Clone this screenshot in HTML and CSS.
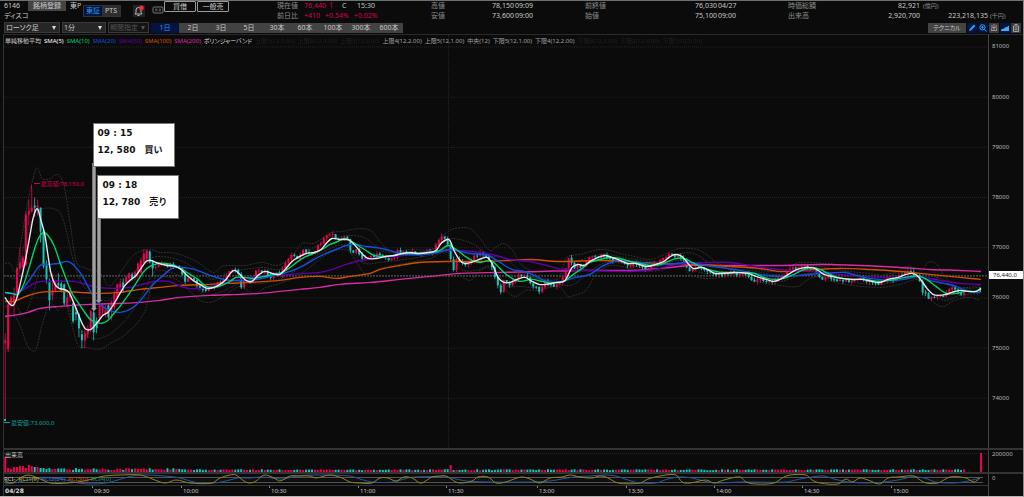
FILE: index.html
```html
<!DOCTYPE html>
<html lang="ja">
<head>
    <meta charset="UTF-8">
    <meta name="viewport" content="width=device-width, initial-scale=1.0">
    <title>6146 ディスコ</title>
    <link rel="stylesheet" href="styles.css">
</head>
<body>
    <header class="quote">
        <div class="identity">
            <div class="stock">
                <div class="stock-line">
                    <span class="code">6146</span>
                    <button class="btn-register">銘柄登録</button>
                    <span>東P</span>
                </div>
                <div class="stock-name">ディスコ</div>
            </div>
            <div class="market">
                <button class="active">東証</button>
                <button>PTS</button>
            </div>
            <button class="icon-bell" aria-label="アラート">
                <svg viewBox="0 0 12 12">
                    <path d="M2 9h7l-1-1.5V5a2.5 2.5 0 0 0-5 0v2.5z" fill="none" stroke="#bbb"/>
                    <path d="M4.5 10.5h2" stroke="#bbb"/>
                    <circle cx="8.4" cy="3" r="2.4" fill="#f03030"/>
                </svg>
            </button>
            <svg class="icon-card" viewBox="0 0 12 8">
                <rect x="1" y="1" width="10" height="6" rx="1" fill="none" stroke="#777"/>
                <path d="M3 3.2h2.4M3 4.8h2.4M6.6 3.2h2.4M6.6 4.8h2.4" stroke="#666"/>
            </svg>
            <div class="flags">
                <button>貸借</button>
                <button>一般売</button>
            </div>
        </div>
        <div class="info">
            <div class="info-now">
                <span class="label">現在値</span>
                <span class="up">76,440 ↑</span>
                <span>C</span>
                <span>15:30</span>
            </div>
            <div class="info-item">
                <span class="label">高値</span><span class="value">78,150</span><span>09:09</span>
            </div>
            <div class="info-item wide">
                <span class="label">前終値</span><span class="value">76,030</span><span>04/27</span>
            </div>
            <div class="info-item wide">
                <span class="label">時価総額</span><span class="value">82,921</span><span class="unit">(億円)</span>
            </div>
            <div class="info-change">
                <span class="label">前日比</span>
                <span class="up">+410</span>
                <span class="up">+0.54%</span>
                <span class="up">+0.02%</span>
            </div>
            <div class="info-item">
                <span class="label">安値</span><span class="value">73,600</span><span>09:00</span>
            </div>
            <div class="info-item wide">
                <span class="label">始値</span><span class="value">75,100</span><span>09:00</span>
            </div>
            <div class="info-item wide">
                <span class="label">出来高</span><span class="value">2,920,700</span><span class="turnover">223,218,135</span><span class="unit">(千円)</span>
            </div>
        </div>
    </header>

    <nav class="toolbar">
        <div class="select select-type"><select aria-label="チャート種別"><option>ローソク足</option></select></div>
        <div class="select select-span"><select aria-label="足種"><option>1分</option></select></div>
        <div class="select select-range disabled"><select aria-label="期間" disabled><option>期間指定</option></select></div>
        <div class="period">
            <button class="active">1日</button>
            <button>2日</button>
            <button>3日</button>
            <button>5日</button>
            <button>30本</button>
            <button>60本</button>
            <button>100本</button>
            <button>300本</button>
            <button>600本</button>
        </div>
        <div class="tools">
            <button class="btn-technical">テクニカル</button>
            <button class="tool blue" aria-label="描画">
                <svg viewBox="0 0 10 10"><path d="M2 8l.6-2L7 1.6 8.4 3 4 7.4z" fill="#3aa0e8"/></svg>
            </button>
            <button class="tool blue" aria-label="拡大">
                <svg viewBox="0 0 10 10"><circle cx="4.5" cy="4.3" r="2.6" fill="none" stroke="#3aa0e8"/><path d="M6.3 6.3L8.6 8.6M3.2 4.3h2.6M4.5 3v2.6" stroke="#3aa0e8"/></svg>
            </button>
            <button class="tool">出</button>
            <button class="tool blue" aria-label="出来高">
                <svg viewBox="0 0 10 10"><path d="M1 8V6.4L4 5.6 6 4h1l2-1.500V8z" fill="#3ab0f0"/></svg>
            </button>
            <button class="tool" aria-label="保存">
                <svg viewBox="0 0 10 10"><path d="M2.5 3h5v5.5h-5zM3.5 1.5h3M3.5 5h3M3.5 6.7h3" fill="none" stroke="#bbb" stroke-width=".8"/></svg>
            </button>
        </div>
    </nav>

    <main class="chart">
        <section class="panel price-panel">
            <svg id="price" viewBox="4 34 984 414" preserveAspectRatio="none"></svg>
            <div class="legend">
                <span>単純移動平均</span>
                <span class="sma5">SMA(5)</span>
                <span class="sma10">SMA(10)</span>
                <span class="sma20">SMA(20)</span>
                <span class="sma50">SMA(50)</span>
                <span class="sma100">SMA(100)</span>
                <span class="sma200">SMA(200)</span>
                <span class="band-title">ボリンジャーバンド</span>
                <span class="off">上限1(12,5.00)</span>
                <span class="off">上限2(12,4.00)</span>
                <span class="off">上限3(12,3.00)</span>
                <span class="band">上限4(12,2.00)</span>
                <span class="band">上限5(12,1.00)</span>
                <span class="band">中央(12)</span>
                <span class="band">下限5(12,1.00)</span>
                <span class="band">下限4(12,2.00)</span>
                <span class="off">下限3(12,3.00)</span>
                <span class="off">下限2(12,4.00)</span>
                <span class="off">下限1(12,5.00)</span>
            </div>
            <div class="mark high">最高値:78,150.0</div>
            <div class="mark low">最安値:73,600.0</div>
            <div class="stem stem-buy"></div>
            <div class="stem stem-sell"></div>
            <div class="note note-buy">09 : 15<br>12, 580&emsp;買い</div>
            <div class="note note-sell">09 : 18<br>12, 780&emsp;売り</div>
        </section>
        <div class="axis" id="price-axis"><span class="last">76,440.0</span></div>

        <section class="panel volume-panel">
            <svg id="volume" viewBox="4 450 984 22" preserveAspectRatio="none"></svg>
            <div class="legend"><span>出来高</span></div>
        </section>
        <div class="axis volume-axis"><span>200000</span></div>

        <section class="panel rci-panel">
            <svg id="rci" viewBox="4 474 984 11" preserveAspectRatio="none"></svg>
            <div class="legend">
                <span>RCI-</span>
                <span class="rci1">RCI1(9)</span>
                <span class="rci2">RCI2(24)</span>
                <span class="rci3">RCI3(0)</span>
                <span class="rci4">RCI4(0)</span>
            </div>
        </section>
        <div class="axis rci-axis"><span>0</span></div>

        <div class="panel time-axis" id="time-axis"></div>
        <div class="axis"></div>
    </main>
    <script src="chart.js"></script>
</body>
</html>
```
FILE: styles.css
```css
* {
    box-sizing: border-box;
}
body {
    margin: 0;
    min-height: 100vh;
    display: flex;
    flex-direction: column;
    background-color: #0b0b0b;
    color: #c8c8c8;
    font-family: "Noto Sans", "Noto Sans CJK JP", sans-serif;
    font-feature-settings: "palt";
    font-size: 7px;
    line-height: 10px;
    border-top: 1px solid #6c706e;
    border-right: 1px solid #8a8a8a;
    border-bottom: 1px solid #b4b4b4;
}
button, select {
    font: inherit;
    font-feature-settings: inherit;
    color: inherit;
    border: none;
    padding: 0;
    margin: 0;
    background: none;
    cursor: pointer;
}

/* quote header */
.quote {
    display: flex;
    height: 20px;
    white-space: nowrap;
}
.identity {
    flex: 0 0 277px;
    display: flex;
    align-items: flex-start;
    padding-left: 4px;
}
.stock {
    width: 79px;
}
.stock-line {
    display: flex;
}
.code {
    width: 24px;
}
.btn-register {
    width: 38px;
    height: 10px;
    margin-right: 4px;
    background-color: #444;
}
.market {
    display: flex;
    margin-top: 4px;
    border: 1px solid #333;
}
.market button {
    width: 18px;
    height: 10px;
    background-color: #2e2e2e;
    line-height: 10px;
}
.market .active, .period .active {
    background-color: #041440;
    color: #2a9be0;
}
.icon-bell {
    width: 12px;
    height: 12px;
    margin: 4px 7px 0 12px;
    background-color: #222;
}
svg {
    display: block;
}
.icon-card {
    flex: none;
    width: 12px;
    height: 8px;
    margin-top: 5px;
}
.flags {
    display: flex;
    gap: 1px;
}
.flags button {
    width: 32px;
    height: 11px;
    border: 1px solid #999;
    border-radius: 1px;
    line-height: 9px;
}
.info {
    flex: 1;
    display: grid;
    grid-template-columns: 154fr 154fr 203fr 235fr;
    grid-auto-rows: 10px;
}
.info-now, .info-change, .info-item {
    display: flex;
}
.label {
    width: 27px;
    color: #8c8c8c;
}
.info-now .up {
    width: 38px;
}
.info-now span:nth-child(3) {
    width: 15px;
}
.info-change {
    gap: 5px;
}
.info-change .label {
    width: 22px;
}
.up {
    color: #d8004a;
}
.value {
    width: 56px;
    margin-right: 1px;
    text-align: right;
}
.wide .value {
    width: 105px;
}
.unit {
    margin-left: 2px;
    color: #8c8c8c;
    font-size: 6px;
}
.turnover {
    width: 67px;
    text-align: right;
}

/* toolbar */
.toolbar {
    display: flex;
    align-items: center;
    gap: 2px;
    height: 13px;
    padding: 0 2px 0 4px;
}
.select {
    position: relative;
    height: 11px;
    background-color: #262626;
    border: 1px solid #3a3a3a;
}
.select::after {
    content: "";
    position: absolute;
    right: 3px;
    top: 3px;
    border: 2px solid transparent;
    border-top: 4px solid #ddd;
    border-bottom: none;
    pointer-events: none;
}
.select select {
    display: block;
    width: 100%;
    height: 9px;
    line-height: 9px;
    padding-left: 1px;
    appearance: none;
    opacity: 1;
}
.select-type {
    width: 56px;
}
.select-span {
    width: 44px;
}
.select-range {
    width: 41px;
}
.disabled {
    background-color: #141414;
    color: #555;
}
.disabled::after {
    border-top-color: #555;
}
.period {
    display: flex;
    background-color: #424242;
}
.period button {
    width: 28px;
    height: 10px;
}
.tools {
    display: flex;
    gap: 1px;
    margin-left: auto;
}
.btn-technical {
    width: 38px;
    height: 10px;
    background-color: #444;
    font-size: 6px;
}
.tool {
    width: 10px;
    height: 10px;
    background-color: #3a3a3a;
}
.blue {
    background-color: #041440;
}

/* chart */
.chart {
    flex: 1;
    display: grid;
    grid-template-columns: 1fr 35px;
    grid-template-rows: 1fr 24px 12px 10px;
    margin-left: 3px;
    border-left: 1px solid #333;
    font-size: 6px;
    line-height: 8px;
}
.panel {
    position: relative;
    min-width: 0;
    min-height: 0;
}
.panel svg {
    position: absolute;
    width: 100%;
    height: 100%;
}
.price-panel {
    border-top: 1px solid #2a2a2a;
    border-bottom: 2px solid #333;
}
.volume-panel {
    border-bottom: 2px solid #333;
}
.rci-panel {
    border-bottom: 1px solid #333;
}
.axis {
    position: relative;
    border-left: 1px solid #444;
    color: #b4b4b4;
}
.price-panel + .axis {
    border-top: 1px solid #2a2a2a;
    border-bottom: 2px solid #333;
}
.volume-axis {
    border-bottom: 2px solid #333;
}
.axis span {
    display: block;
    padding-left: 3px;
}
#price-axis span {
    position: absolute;
    left: 0;
    margin-top: -4px;
}
#price-axis .last {
    right: 0;
    padding-left: 4px;
    background-color: #fff;
    color: #222;
}
.legend {
    position: absolute;
    top: 2px;
    left: 1px;
    display: flex;
    gap: 3px;
    white-space: nowrap;
}
.volume-panel .legend {
    top: 1px;
}
.rci-panel .legend {
    top: 1px;
    left: 0;
}
.sma5 { color: #fff; }
.sma10 { color: #00d468; }
.sma20 { color: #1450dc; }
.sma50 { color: #6000a4; }
.sma100 { color: #dc5000; }
.sma200 { color: #d82ca4; }
.band { color: #a0a0a0; }
.off { color: #202020; }
.band-title { color: #ddd; }
.rci1 { color: #c0b414; }
.rci2 { color: #3470d0; }
.rci3 { color: #d05018; }
.rci4 { color: #149058; }

.mark {
    position: absolute;
    white-space: nowrap;
}
.mark::before {
    content: "";
    display: inline-block;
    width: 6px;
    height: 1px;
    margin-right: 1px;
    vertical-align: 2px;
    background-color: currentColor;
}
.high {
    left: 3%;
    top: 35%;
    color: #d00046;
}
.low {
    left: 0;
    top: 93%;
    color: #10a098;
}
.note {
    position: absolute;
    width: 82px;
    padding: 1px 4px 7px;
    background-color: #fff;
    border: 1px solid #777;
    color: #111;
    font: bold 9px/17px "DejaVu Sans", "Noto Sans CJK JP", sans-serif;
    font-feature-settings: normal;
    white-space: nowrap;
}
.note-buy {
    left: 9%;
    top: 21.4%;
}
.note-sell {
    left: 9.5%;
    top: 34%;
}
.stem {
    position: absolute;
    width: 4px;
    background-color: #a0a0a0;
    border: 1px solid #777;
    border-width: 0 1px;
}
.stem::after {
    content: "";
    position: absolute;
    left: -2px;
    bottom: -2px;
    border: 3px solid transparent;
    border-top-color: #a0a0a0;
    border-bottom: none;
}
.stem-buy {
    left: 8.9%;
    top: 31%;
    height: 35.4%;
}
.stem-sell {
    left: 9.5%;
    top: 44%;
    height: 20.4%;
}

.time-axis span {
    position: absolute;
    top: 1px;
    padding-left: 2px;
}
.time-axis .date {
    left: 0;
    padding-left: 1px;
    color: #ddd;
    font-family: "DejaVu Sans", sans-serif;
    font-weight: bold;
}
.time-axis span:not(.date)::before {
    content: "";
    position: absolute;
    left: 0;
    top: -1px;
    height: 2px;
    border-left: 1px solid #888;
}

/* svg parts */
.chart path {
    vector-effect: non-scaling-stroke;
}
.line {
    fill: none;
    stroke-width: 1.4;
}
.line.sma5 { stroke: #e8e8e8; }
.line.sma10 { stroke: #00d468; }
.line.sma20 { stroke: #1450dc; }
.line.sma50 { stroke: #6000a4; }
.line.sma100 { stroke: #d05000; }
.line.sma200 { stroke: #d82ca4; }
.line.bb {
    stroke: #303030;
    stroke-width: 1;
    stroke-dasharray: 2 1;
}
.line.rci1 { stroke: #8c8420; stroke-width: 1; }
.line.rci2 { stroke: #28549c; stroke-width: 1; }
.grid {
    stroke: #242424;
    stroke-dasharray: 1 1;
}
.current {
    stroke: #686868;
    stroke-dasharray: 2 1;
}
.guide { stroke: #555; }
.rise { fill: #f00050; }
.fall { fill: #12c8bc; }
```
FILE: chart.js
```js
const PITCH = 2.95;

// keypoints of each line: x,y pairs
const LINES = {
    bb: [
        '5,263 10,263 16,270 22,235 28,200 33,178 37,167 42,178 50,178 58,174 64,185 70,222 76,260 84,267 92,270 100,272 108,285 114,282 122,270 132,256 142,250 150,249 160,252 170,252 180,254 190,258 200,263 206,268 214,272 222,266 232,265 246,265 262,262 276,265 284,262 294,253 302,243 314,243 322,238 332,232 342,231 352,229 362,228 372,231 380,241 390,250 410,249 434,248 442,236 450,230 454,228 470,228 480,238 490,250 498,245 504,243 512,249 520,263 530,270 540,277 550,280 560,275 566,258 572,255 580,254 590,251 600,249 610,250 620,253 630,255 650,259 662,255 670,251 680,248 690,248 700,250 710,257 718,263 730,266 750,268 770,271 784,270 796,263 808,262 824,263 836,264 846,270 870,273 890,275 906,266 916,268 922,270 928,262 936,263 944,275 956,286 968,287 980,285',
        '5,275 18,275 24,245 32,220 40,209 58,210 64,222 72,255 80,280 90,292 104,300 112,298 124,287 134,272 146,260 160,256 180,260 200,271 212,279 230,272 262,267 280,269 296,258 310,249 330,239 350,235 366,238 384,251 430,250 446,239 460,239 474,244 490,255 504,257 520,270 540,279 558,279 570,265 586,258 604,254 630,258 656,261 676,254 694,253 714,265 750,270 780,274 804,265 836,269 870,276 904,271 924,274 940,278 958,288 980,287',
        '5,306 16,305 24,315 34,290 42,262 52,275 62,288 70,310 80,328 92,338 106,336 118,327 130,314 142,295 154,272 170,272 188,280 204,294 220,292 240,283 262,283 286,276 304,264 326,250 346,245 362,262 380,262 430,255 450,250 460,268 476,270 492,266 506,285 520,286 540,287 562,285 574,284 594,268 612,261 650,268 680,260 700,272 750,275 780,281 808,273 840,280 880,284 916,278 930,291 944,300 960,295 980,293',
        '5,317 14,316 20,325 26,342 30,349 36,349 42,325 50,303 58,310 66,305 72,325 78,345 86,347 100,349 112,342 122,337 130,330 138,322 146,308 150,290 156,276 166,276 178,280 190,291 200,300 210,302 222,297 240,286 254,293 266,287 280,283 300,274 330,252 348,250 358,264 366,274 380,268 430,258 448,252 456,270 470,280 480,270 490,268 500,282 508,292 516,296 526,290 540,290 550,287 560,287 568,296 574,295 586,290 596,274 610,265 640,270 660,270 680,264 690,274 706,278 740,276 760,282 780,285 798,286 810,278 824,276 840,283 880,287 900,284 920,280 928,295 936,304 944,306 954,300 970,297 980,300'
    ],
    sma200: ['5,316 14,315 28,312 40,308 60,306 90,304 120,303 140,302 160,300 180,297 210,295 240,294 260,293 280,291 300,289 320,287 340,284 370,282 400,279 430,276 460,273 500,272 540,271 580,270 630,270 650,269 670,267 690,265 710,265 740,265 780,265 820,264 860,265 900,267 930,269 960,270 981,271'],
    sma100: ['5,301 14,301 26,296 40,292 60,291 80,292 100,293 120,292 140,289 160,287 180,285 210,284 225,283 250,282 280,280 300,277 320,276 336,278 350,276 370,273 380,269 400,265 420,262 450,261 480,261 510,260 530,259 560,261 600,260 640,262 680,264 700,264 730,266 760,268 780,271 800,270 840,268 870,269 900,271 930,274 960,277 981,279'],
    sma50: ['5,293 16,293 26,288 34,283 42,281 60,281 74,281 86,284 98,287 114,288 130,287 142,284 156,281 168,281 176,284 188,288 200,288 212,286 222,284 236,280 250,277 270,275 290,274 304,273 320,272 332,269 346,264 360,260 380,257 396,256 420,253 440,250 460,250 480,252 496,255 510,259 530,261 550,266 564,269 590,270 630,271 656,269 670,265 690,263 706,262 730,262 750,265 770,268 790,270 820,272 850,275 880,277 900,277 918,276 940,280 960,283 981,284'],
    sma20: ['5,292 16,293 24,287 32,276 40,265 48,264 58,263 68,261 74,265 82,275 90,290 96,300 104,307 112,311 120,312 130,309 138,303 146,293 154,283 162,276 172,268 180,267 190,268 200,271 210,275 220,278 230,280 250,280 262,278 278,274 290,271 302,266 314,259 326,253 336,249 346,245 356,244 366,246 376,247 386,249 396,252 408,254 424,254 438,252 450,249 460,251 470,253 488,255 500,262 512,269 524,271 534,275 544,280 556,282 566,280 576,277 590,274 602,266 614,261 624,260 640,262 660,264 676,263 690,262 706,265 720,267 740,270 760,274 780,276 800,275 820,273 844,272 856,275 870,278 890,280 904,279 918,276 930,280 944,283 956,286 968,291 980,292'],
    sma10: ['5,292 12,293 18,294 24,283 30,264 36,244 40,235 44,232 48,235 54,245 60,262 66,278 72,293 78,302 84,311 90,319 96,322 102,323 108,320 114,313 120,306 128,295 136,283 144,271 150,266 158,263 166,263 174,265 182,269 190,274 198,279 206,286 214,287 222,285 230,281 236,277 244,277 254,278 264,276 274,274 282,272 290,267 298,261 306,256 314,253 322,249 330,244 338,241 344,238 350,240 358,245 366,250 374,255 384,256 394,255 406,253 420,253 432,252 440,250 448,245 456,249 464,255 472,260 480,262 490,260 496,264 504,272 512,278 520,281 532,279 542,281 552,283 564,281 572,275 582,268 590,262 600,259 610,257 620,258 630,261 640,263 650,265 660,264 668,261 676,258 684,258 692,262 702,267 712,270 722,272 740,272 754,273 764,277 774,279 784,278 794,274 804,269 812,267 820,269 828,273 838,277 850,279 864,279 880,281 890,280 900,278 912,276 920,276 928,280 936,286 946,293 956,293 966,291 976,291 981,289'],
    sma5: ['5,297 9,303 13,305 17,297 21,280 25,262 29,240 33,218 36,209 38,209 41,220 45,235 48,255 51,273 55,284 59,288 64,289 69,292 74,303 78,313 82,323 86,329 91,329 95,325 99,320 103,315 108,312 113,305 120,293 125,285 130,280 136,275 141,268 146,261 151,260 156,262 162,264 168,265 175,266 181,269 186,274 193,280 200,284 207,288 214,287 220,284 226,279 231,272 235,270 240,274 246,280 252,281 258,275 265,271 272,273 280,274 286,268 292,261 298,257 306,253 314,252 321,249 327,242 332,238 340,239 346,239 350,240 356,246 362,253 368,258 376,258 386,256 394,255 402,253 410,252 418,253 428,252 436,250 441,243 447,239 450,240 454,250 460,260 465,263 474,261 482,258 487,257 492,263 498,277 504,282 510,282 517,279 525,277 532,281 539,284 546,284 556,282 565,280 572,267 578,264 584,265 590,261 598,257 605,255 612,257 620,260 628,263 636,263 646,266 656,264 664,261 669,257 675,254 682,256 688,263 693,268 702,267 709,270 715,273 722,273 736,272 748,273 756,276 766,279 774,281 782,278 790,273 797,269 806,267 815,268 824,274 832,276 842,278 852,279 862,279 872,281 880,282 888,279 898,277 906,274 912,273 917,275 922,281 927,288 933,294 938,295 946,294 952,292 960,290 968,291 976,291 981,288']
};

const RCI = {
    rci2: '5,484 14,483 28,480 40,478 54,478 66,480 78,483 92,484 106,483 118,480 128,477 140,475 165,476 180,478 190,481 200,483 214,483 226,481 238,478 250,478 262,477 272,478 284,479 296,476 320,475 350,476 360,479 372,482 394,482 404,479 414,477 446,477 456,479 466,481 490,482 530,482 550,481 562,479 574,477 590,476 604,475 616,476 628,480 640,483 656,483 668,479 680,477 692,478 704,481 716,483 740,482 786,482 800,479 812,477 824,476 834,479 848,482 868,483 884,482 898,480 912,477 924,478 936,482 954,483 968,481 980,478',
    rci1: '5,481 12,483 20,478 28,475 38,478 50,483 68,483 84,481 96,478 104,476 120,475 140,475 150,478 160,482 166,483 176,480 190,483 212,483 220,478 230,475 236,475 244,481 250,483 256,481 262,476 266,475 274,478 280,481 290,476 300,476 310,476 316,478 330,475 342,478 350,482 360,483 372,483 380,478 388,478 396,481 404,477 412,478 420,483 424,482 432,477 440,476 446,476 456,482 462,483 472,481 478,477 488,477 496,483 506,482 514,479 522,477 530,479 540,483 550,478 562,477 570,475 580,477 592,478 600,476 606,477 618,483 640,483 648,479 660,476 676,475 682,482 690,483 706,480 714,483 724,480 740,477 746,482 756,484 774,483 784,477 790,475 806,475 812,480 820,483 838,484 846,479 852,482 860,478 868,480 880,484 888,478 898,477 914,476 920,480 926,483 938,483 950,477 966,478 974,482 980,478'
};

// opening hour, one candle a minute: high, low, top, bottom, 1 = rise
const OPENING = [
    [333, 420, 340, 343, 1], [302, 352, 304, 349, 1], [295, 307, 297, 305, 1], [287, 316, 295, 303, 1],
    [267, 297, 268, 293, 1], [247, 270, 262, 268, 1], [255, 270, 257, 267, 1], [211, 265, 214, 265, 1],
    [199, 225, 210, 214, 1], [187, 212, 207, 211, 1], [197, 216, 205, 207, 0], [199, 215, 205, 207, 1],
    [207, 242, 207, 231, 0], [227, 268, 230, 266, 0], [260, 283, 265, 279, 0], [278, 310, 282, 300, 0],
    [273, 300, 290, 295, 1], [280, 292, 282, 290, 1], [273, 287, 283, 285, 0], [280, 292, 283, 290, 0],
    [283, 305, 284, 303, 0], [292, 307, 297, 305, 1], [287, 301, 293, 297, 1], [302, 323, 303, 321, 0],
    [307, 320, 312, 314, 0], [313, 337, 314, 328, 0], [330, 348, 334, 340, 0], [328, 348, 333, 340, 1],
    [325, 338, 328, 334, 1], [310, 332, 311, 328, 1], [307, 340, 312, 332, 0], [317, 333, 322, 328, 0],
    [303, 323, 304, 318, 1], [303, 315, 305, 310, 1], [305, 317, 310, 314, 1], [303, 318, 305, 317, 0],
    [300, 320, 302, 310, 1], [290, 309, 293, 307, 1], [283, 300, 284, 297, 1], [278, 290, 283, 287, 1],
    [278, 292, 282, 287, 0], [275, 285, 277, 282, 1], [272, 282, 273, 278, 1], [272, 280, 274, 278, 0],
    [270, 280, 272, 277, 1], [262, 277, 263, 273, 1], [257, 273, 260, 272, 1], [249, 263, 253, 262, 1],
    [249, 262, 250, 258, 1], [250, 263, 251, 262, 0], [260, 276, 261, 268, 0]
];

// closing prices after that
const CLOSES = '153,268 160,264 165,265 172,264 178,266 181,267 184,281 190,276 198,285 205,291 212,286 220,282 226,275 232,268 238,270 240,287 244,281 250,282 254,273 260,270 266,272 271,278 276,273 281,273 286,262 292,255 297,258 302,250 308,252 314,253 318,245 324,238 328,233 332,234 337,240 344,236 348,240 351,252 357,250 362,260 368,257 374,256 378,254 384,257 391,260 398,250 406,252 414,253 421,254 428,252 434,249 438,240 443,235 447,238 450,255 453,274 456,260 462,263 470,265 476,253 482,254 488,256 493,272 498,285 501,291 504,277 511,285 518,276 526,274 532,285 540,291 546,280 554,286 562,280 566,265 569,258 575,267 582,265 590,258 597,256 604,254 612,262 620,258 628,266 636,262 644,268 652,265 660,262 664,256 672,254 678,257 684,260 688,270 694,268 700,265 707,273 714,275 720,275 728,272 738,273 748,274 752,281 758,278 764,281 769,283 776,277 784,275 788,270 796,267 804,267 812,268 818,273 822,279 828,276 836,279 844,280 850,281 856,278 862,278 868,280 874,284 880,284 886,279 894,278 900,276 906,271 910,270 916,276 919,277 921,290 925,292 928,300 932,295 940,297 948,290 954,287 958,290 960,297 963,292';

function points(text) {
    return text.split(' ').map(p => p.split(',').map(Number));
}

function curve(text) {
    const p = points(text);
    let d = 'M' + p[0];
    for (let i = 0; i < p.length - 1; i++) {
        const a = p[i - 1] || p[i], b = p[i], c = p[i + 1], e = p[i + 2] || c;
        const third = (c[0] - b[0]) / 3;
        const s1 = (c[1] - a[1]) / (c[0] - a[0]), s2 = (e[1] - b[1]) / (e[0] - b[0]);
        d += `C${b[0] + third},${b[1] + s1 * third} ${c[0] - third},${c[1] - s2 * third} ${c}`;
    }
    return d;
}

function valueAt(p, x) {
    let i = 1;
    while (i < p.length - 1 && p[i][0] < x) i++;
    const [x0, y0] = p[i - 1], [x1, y1] = p[i];
    return y0 + (y1 - y0) * (x - x0) / (x1 - x0);
}

function noise(i) {
    const n = Math.sin(i * 127.1) * 43758.5453;
    return n - Math.floor(n);
}

function line(name, text) {
    return `<path class="line ${name}" d="${curve(text)}"/>`;
}

function rect(x, y, w, h, cls) {
    return `<rect class="${cls}" x="${x}" y="${y}" width="${w}" height="${h}"/>`;
}

function priceY(price) {
    return 297.5 - (price - 76000) * 0.0503;
}

const candles = OPENING.slice();
const closes = points(CLOSES);
for (let i = candles.length; 5.2 + i * PITCH < 965; i++) {
    const x = 5.2 + i * PITCH;
    const open = valueAt(closes, x - PITCH) + (noise(i - 1) - 0.5) * 4;
    const close = valueAt(closes, x) + (noise(i) - 0.5) * 4;
    const top = Math.min(open, close), bottom = Math.max(open, close, top + 1);
    candles.push([top - noise(i + 500) * 3, bottom + noise(i + 900) * 3, top, bottom, close < open ? 1 : 0]);
}

// price panel
let price = '';
let labels = '';
for (let p = 74000; p <= 81000; p += 1000) {
    const y = priceY(p);
    price += `<path class="grid" d="M4,${y}H988"/>`;
    labels += `<span style="top:${(y - 34.5) / 4.14}%">${p}</span>`;
}
price += '<path class="grid" d="M448.5,34V448"/>';
price += '<path class="current" d="M4,275.5H988"/>';
price += LINES.bb.map(t => line('bb', t)).join('');
candles.forEach(([high, low, top, bottom, up], i) => {
    const x = 5.2 + i * PITCH, cls = up ? 'rise' : 'fall';
    price += rect(x - 0.4, high, 0.8, low - high, cls) + rect(x - 1, top, 2, bottom - top, cls);
});
price += rect(979.5, 287, 1.5, 5, 'fall');
for (const name of ['sma200', 'sma100', 'sma50', 'sma20', 'sma10', 'sma5']) {
    price += line(name, LINES[name][0]);
}
price += rect(4, 419, 2, 2, 'fall') + rect(31, 185, 1, 2, 'rise');
document.getElementById('price').innerHTML = price;

const axis = document.getElementById('price-axis');
axis.innerHTML += labels;
axis.querySelector('.last').style.top = (275.5 - 34.5) / 4.14 + '%';

// volume panel
const FIRST = [15, 4, 3, 5, 5, 6, 6, 4, 7, 6, 5, 5, 4, 4, 3];
let volume = '<path class="grid" d="M4,453.5H988"/>';
candles.forEach((c, i) => {
    const x = 4.2 + i * PITCH;
    const open = Math.abs(x - 449) < 1.5;
    const h = i < FIRST.length ? FIRST[i] : open ? 7 : (i < 60 ? 2 + noise(i) * 2 : 1.8 + noise(i));
    volume += rect(x, 472 - h, 2, h, c[4] || open ? 'rise' : 'fall');
});
volume += rect(980, 453, 2, 19, 'rise');
document.getElementById('volume').innerHTML = volume;

// RCI panel
document.getElementById('rci').innerHTML =
    '<path class="guide" d="M4,477.5H983M4,482.5H983"/><path class="grid" d="M4,480H983"/>' +
    line('rci2', RCI.rci2) + line('rci1', RCI.rci1);

// time axis
const TIMES = [['09:30', 92], ['10:00', 181], ['10:30', 269], ['11:00', 358], ['11:30', 446],
    ['13:00', 537], ['13:30', 626], ['14:00', 714], ['14:30', 802], ['15:00', 891]];
document.getElementById('time-axis').innerHTML = '<span class="date">04/28</span>' +
    TIMES.map(([t, x]) => `<span style="left:${(x - 4) / 9.84}%">${t}</span>`).join('');
```
